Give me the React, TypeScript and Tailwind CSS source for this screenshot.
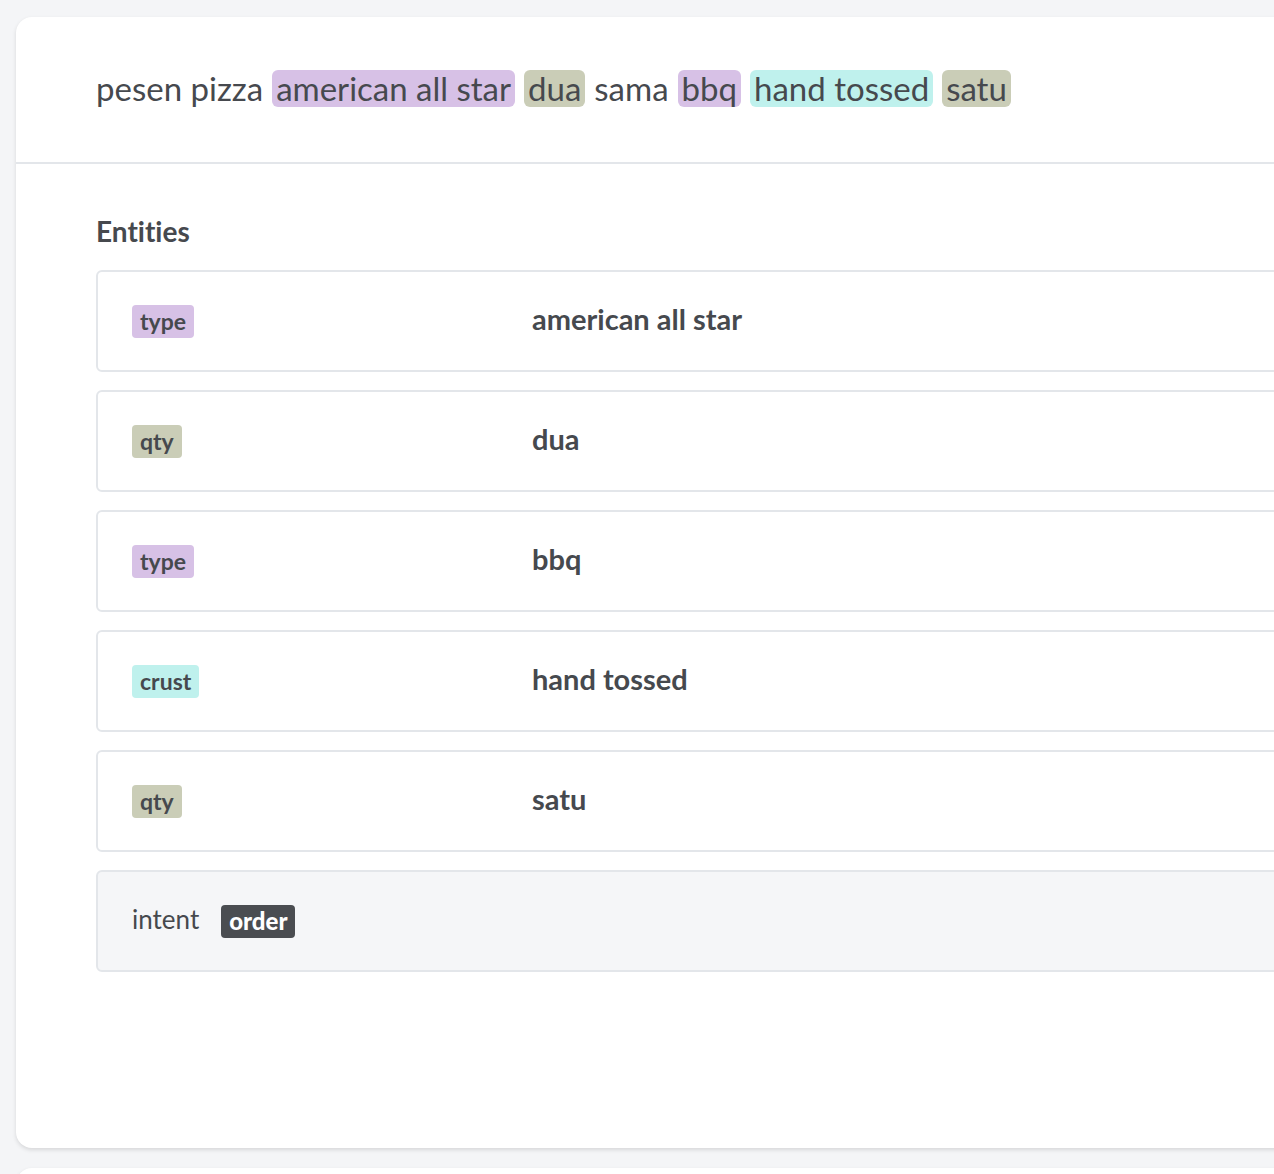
import React from 'react';

type Tag = 'type' | 'qty' | 'crust';

const tagColor: Record<Tag, string> = {
  type: 'bg-[#d7c1e6]',
  qty: 'bg-[#cacdb7]',
  crust: 'bg-[#bff1ed]',
};

const sentence: { text: string; tag?: Tag }[] = [
  { text: 'pesen pizza' },
  { text: 'american all star', tag: 'type' },
  { text: 'dua', tag: 'qty' },
  { text: 'sama' },
  { text: 'bbq', tag: 'type' },
  { text: 'hand tossed', tag: 'crust' },
  { text: 'satu', tag: 'qty' },
];

const entities: { tag: Tag; value: string }[] = [
  { tag: 'type', value: 'american all star' },
  { tag: 'qty', value: 'dua' },
  { tag: 'type', value: 'bbq' },
  { tag: 'crust', value: 'hand tossed' },
  { tag: 'qty', value: 'satu' },
];

const App: React.FC = () => {
  return (
    <div
      className="min-h-screen bg-[#f4f5f7] text-[#46494e] overflow-hidden pt-[17px] pl-4 [font-variant-ligatures:none]"
      style={{ fontFamily: 'Lato, "Open Sans", sans-serif' }}
    >
      <div className="w-[1400px] bg-white rounded-2xl shadow-[0_2px_4px_rgba(0,0,0,0.12)]">
        {/* Utterance */}
        <div className="h-[147px] border-b-2 border-[#e3e6ea] pl-20 flex items-center">
          <div className="flex items-center gap-[9px] text-[33px] leading-none -mt-[3px]">
            {sentence.map((s, i) =>
              s.tag ? (
                <span key={i} className={`${tagColor[s.tag]} rounded-md px-1 h-[37px] flex items-center`}>
                  {s.text}
                </span>
              ) : (
                <span key={i}>{s.text}</span>
              )
            )}
          </div>
        </div>

        {/* Entities */}
        <div className="pl-20 pr-20 pt-[53px] pb-[176px]">
          <h2 className="text-[28px] font-bold leading-none mb-[25px]">Entities</h2>
          <div className="flex flex-col gap-[18px]">
            {entities.map((e, i) => (
              <div
                key={i}
                className="h-[102px] border-2 border-[#e3e6ea] rounded-md pl-[34px] grid grid-cols-[400px_1fr] items-center"
              >
                <div>
                  <span className={`${tagColor[e.tag]} inline-flex items-center h-[33px] px-2 rounded text-[23px] font-bold`}>
                    {e.tag}
                  </span>
                </div>
                <div className="text-[29px] font-bold -mt-1">{e.value}</div>
              </div>
            ))}
            <div className="h-[102px] border-2 border-[#e3e6ea] bg-[#f5f6f8] rounded-md pl-[34px] flex items-center gap-[22px]">
              <span className="text-[26px] -mt-1">intent</span>
              <span className="bg-[#4a4d51] text-white inline-flex items-center h-[33px] px-2 rounded text-[24px] font-black">
                order
              </span>
            </div>
          </div>
        </div>
      </div>
      <div className="w-[1400px] h-[60px] bg-white rounded-2xl mt-5 shadow-[0_2px_4px_rgba(0,0,0,0.12)]" />
    </div>
  );
};

export default App;
